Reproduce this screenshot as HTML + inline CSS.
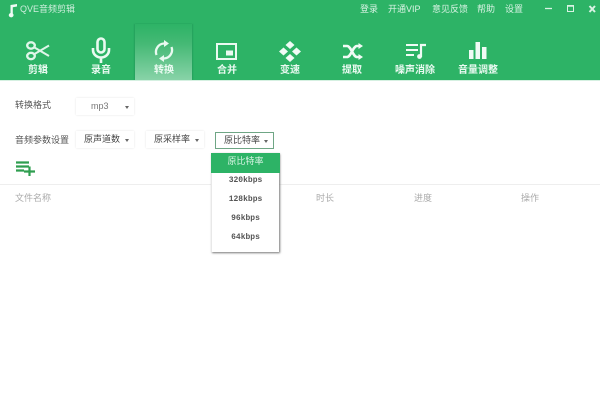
<!DOCTYPE html>
<html lang="zh"><head><meta charset="utf-8"><title>QVE音频剪辑</title>
<style>
html,body{margin:0;padding:0;width:600px;height:403px;overflow:hidden;background:#fff;font-family:"Liberation Sans","Noto Sans CJK SC",sans-serif}
#w{position:absolute;left:0;top:0;width:600px;height:403px;filter:blur(.35px)}
.a{position:absolute;white-space:nowrap;line-height:1}
#hd{position:absolute;left:0;top:0;width:600px;height:80px;background:#2db366}
#act{position:absolute;left:135px;top:24px;width:57px;height:56px;background:linear-gradient(to bottom,#2db366 0%,#45b975 35%,#88d3a8 100%);box-shadow:-1px 0 1px rgba(20,120,70,.3),1px 0 1px rgba(20,120,70,.3)}
#hl{position:absolute;left:0;top:80px;width:600px;height:1px;background:#d5f0e1}
.top{color:#d9f3e4;font-size:9px;top:5px}
.nav{color:#eafaf1;font-size:10px;font-weight:bold;top:66px;text-align:center;transform:translateX(-50%)}
svg{position:absolute;overflow:visible}
.lb{color:#555;font-size:9px}
.sel{position:absolute;height:17px;background:#fff;box-shadow:0 0 2px #e4e4e4;color:#444;font-size:9px;line-height:17px;box-sizing:border-box;padding-left:8px}
.sel i{position:absolute;right:5px;top:8px;width:0;height:0;border:2px solid transparent;border-top:3px solid #666;border-bottom:0}
.th{color:#aaa;font-size:9px;top:194px}
#dd{position:absolute;left:211px;top:153px;width:68px;height:99px;background:#fff;box-shadow:1px 1px 2px #777;border-left:1px solid #e8e8e8;box-sizing:border-box}
#dd div{position:absolute;left:-1px;width:69px;text-align:center;font-family:"Liberation Mono","Noto Sans CJK SC",monospace;font-size:8px;font-weight:bold;color:#555;line-height:16px;height:16px}
#dd .on{top:0;height:20px;line-height:17px;background:#2db366;color:#d9f5e5;font-size:9px;font-weight:normal;font-family:"Liberation Sans","Noto Sans CJK SC",sans-serif}
</style></head><body><div id="w">
<div id="hd"></div><div id="act"></div><div id="hl"></div>

<svg style="left:8px;top:3px" width="10" height="13" viewBox="0 0 10 13"><path d="M2.5 10V2L9 1V3.5L4.8 4.2V10.5A2.4 2.2 0 1 1 2.5 10Z" fill="#f0fbf5"/></svg>
<div class="a" style="left:20px;top:5px;color:#cfeedd;font-size:9px">QVE音频剪辑</div>

<div class="a top" style="left:360px">登录</div>
<div class="a top" style="left:388px">开通VIP</div>
<div class="a top" style="left:432px">意见反馈</div>
<div class="a top" style="left:477px">帮助</div>
<div class="a top" style="left:505px">设置</div>
<svg style="left:545px;top:3px" width="50" height="12" viewBox="0 0 50 12" fill="none" stroke="#d9f3e4"><path d="M0 5.5H7" stroke-width="1.3"/><rect x="22.5" y="2.5" width="6" height="6" stroke-width="1"/><path d="M22 3H29" stroke-width="1.5"/><path d="M44.5 3L50 9M50 3L44.5 9" stroke-width="2"/></svg>

<!-- scissors -->
<svg style="left:26px;top:41px" width="24" height="20" viewBox="0 0 24 20" fill="none" stroke="#dff6e9" stroke-width="2.4"><ellipse cx="5" cy="4.5" rx="3.8" ry="3.2"/><ellipse cx="5" cy="15" rx="3.8" ry="3.2"/><path d="M8.5 6.5L23 15M8.5 13L23 4.5" stroke-width="2"/></svg>
<div class="a nav" style="left:38px">剪辑</div>
<!-- mic -->
<svg style="left:91px;top:37px" width="20" height="26" viewBox="0 0 20 26" fill="none" stroke="#eafaf1" stroke-width="2.4"><rect x="6.5" y="1.5" width="7" height="14" rx="3.5" stroke-width="2.6"/><path d="M2 11V13A8 7.5 0 0 0 18 13V11M10 20V26" stroke-width="2.6"/></svg>
<div class="a nav" style="left:101px">录音</div>
<!-- sync -->
<svg style="left:154px;top:39px" width="20" height="24" viewBox="0 0 20 24" fill="none" stroke="#eafaf1" stroke-width="2.3"><path d="M2.5 16A8.5 8.5 0 0 1 10 4.5H12"/><path d="M17.5 8A8.5 8.5 0 0 1 10 19.5H8"/><path d="M10 1L15 4.5L10 8ZM10 16L5 19.5L10 23Z" fill="#eafaf1" stroke="none"/></svg>
<div class="a nav" style="left:164px">转换</div>
<!-- pip -->
<svg style="left:216px;top:43px" width="21" height="17" viewBox="0 0 21 17" fill="none"><rect x="1" y="1" width="19" height="15" stroke="#eafaf1" stroke-width="2"/><rect x="10" y="7.5" width="7" height="5" fill="#eafaf1"/></svg>
<div class="a nav" style="left:227px">合并</div>
<!-- diamonds -->
<svg style="left:279px;top:41px" width="22" height="21" viewBox="0 0 22 21" fill="#f0fbf5"><path d="M11 0L15.5 4L11 8L6.5 4ZM4.5 6.5L9 10.5L4.5 14.5L0 10.5ZM17.5 6.5L22 10.5L17.5 14.5L13 10.5ZM11 13L15.5 17L11 21L6.5 17Z"/></svg>
<div class="a nav" style="left:290px">变速</div>
<!-- shuffle -->
<svg style="left:343px;top:43px" width="20" height="17" viewBox="0 0 20 17" fill="none" stroke="#f0fbf5" stroke-width="2.6"><path d="M0 3H4C8 3 10 14 14 14H17M0 14H4C8 14 10 3 14 3H17"/><path d="M15.5 0L20 3L15.5 6ZM15.5 11L20 14L15.5 17Z" fill="#f0fbf5" stroke="none"/></svg>
<div class="a nav" style="left:352px">提取</div>
<!-- list note -->
<svg style="left:405px;top:43px" width="22" height="16" viewBox="0 0 22 16" fill="none" stroke="#f0fbf5" stroke-width="2"><path d="M1 2H13M1 7H13M1 12H9"/><path d="M16 14V2H21" stroke-width="2.2"/><circle cx="14.5" cy="13.5" r="2.4" fill="#f0fbf5" stroke="none"/></svg>
<div class="a nav" style="left:415px">噪声消除</div>
<!-- bars -->
<svg style="left:469px;top:42px" width="18" height="17" viewBox="0 0 18 17" fill="#f0fbf5"><rect x="0" y="8" width="4.5" height="9"/><rect x="6.5" y="0" width="4.5" height="17"/><rect x="13" y="5" width="4.5" height="12"/></svg>
<div class="a nav" style="left:478px">音量调整</div>

<div class="a lb" style="left:15px;top:101px">转换格式</div>
<div class="sel" style="left:76px;top:98px;width:58px;padding-left:15px;color:#777">mp3<i></i></div>

<div class="a lb" style="left:15px;top:136px">音频参数设置</div>
<div class="sel" style="left:76px;top:131px;width:58px;padding-left:8px">原声道数<i></i></div>
<div class="sel" style="left:146px;top:131px;width:58px;padding-left:8px">原采样率<i></i></div>
<div class="sel" style="left:215px;top:132px;width:59px;padding-left:8px;border:1px solid #6fa685;line-height:15px;box-shadow:none">原比特率<i style="top:7px"></i></div>

<svg style="left:16px;top:161px" width="20" height="15" viewBox="0 0 20 15" fill="none" stroke="#2f9e4f" stroke-width="2.2"><path d="M0 1.5H13M0 5.5H13M0 9.5H8M8 10.5H19M13.5 5.5V15"/></svg>

<div class="a" style="left:0;top:184px;width:600px;height:1px;background:#eee"></div>
<div class="a th" style="left:15px">文件名称</div>
<div class="a th" style="left:316px">时长</div>
<div class="a th" style="left:414px">进度</div>
<div class="a th" style="left:521px">操作</div>

<div id="dd">
<div class="on">原比特率</div>
<div style="top:20px">320kbps</div>
<div style="top:39px">128kbps</div>
<div style="top:58px">96kbps</div>
<div style="top:77px">64kbps</div>
</div>
</div></body></html>
